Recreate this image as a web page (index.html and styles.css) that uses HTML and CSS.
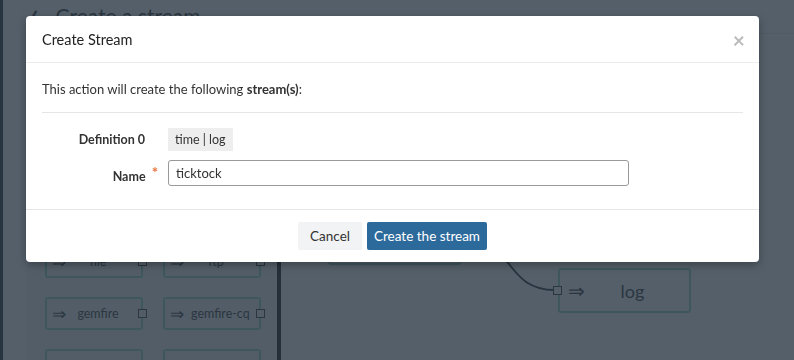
FILE: index.html
```html
<!DOCTYPE html>
<html lang="en">
<head>
    <meta charset="UTF-8">
    <meta name="viewport" content="width=device-width, initial-scale=1.0">
    <title>Create a stream</title>
    <link rel="stylesheet" href="styles.css">
</head>
<body>
    <div class="app">
        <div class="gutter"></div>
        <div class="page">
            <header class="page-header">
                <span class="back">&lsaquo;</span>
                <h1>Create a stream</h1>
            </header>
            <div class="workspace">
                <div class="palette">
                    <div class="palette-item"><span class="arrow">&rArr;</span><span class="name">cdc</span><span class="port"></span></div>
                    <div class="palette-item"><span class="arrow">&rArr;</span><span class="name">geode</span><span class="port"></span></div>
                    <div class="palette-item"><span class="arrow">&rArr;</span><span class="name">http</span><span class="port"></span></div>
                    <div class="palette-item"><span class="arrow">&rArr;</span><span class="name">jdbc</span><span class="port"></span></div>
                    <div class="palette-item"><span class="arrow">&rArr;</span><span class="name">jms</span><span class="port"></span></div>
                    <div class="palette-item"><span class="arrow">&rArr;</span><span class="name">mail</span><span class="port"></span></div>
                    <div class="palette-item"><span class="arrow">&rArr;</span><span class="name">mongodb</span><span class="port"></span></div>
                    <div class="palette-item"><span class="arrow">&rArr;</span><span class="name">mqtt</span><span class="port"></span></div>
                    <div class="palette-item"><span class="arrow">&rArr;</span><span class="name">file</span><span class="port"></span></div>
                    <div class="palette-item"><span class="arrow">&rArr;</span><span class="name">ftp</span><span class="port"></span></div>
                    <div class="palette-item"><span class="arrow">&rArr;</span><span class="name">gemfire</span><span class="port"></span></div>
                    <div class="palette-item"><span class="arrow">&rArr;</span><span class="name name-left">gemfire-cq</span><span class="port"></span></div>
                    <div class="palette-item"><span class="arrow">&rArr;</span><span class="name">rabbit</span><span class="port"></span></div>
                    <div class="palette-item"><span class="arrow">&rArr;</span><span class="name">s3</span><span class="port"></span></div>
                </div>
                <div class="canvas">
                    <svg class="links" width="513" height="326" viewBox="281 34 513 326">
                        <path d="M469 242 C 515 242, 505 290, 555 290" fill="none" stroke="#1f2a30" stroke-width="2"/>
                    </svg>
                    <div class="node node-time"><span class="arrow">&rArr;</span><span class="name">time</span><span class="port port-out"></span></div>
                    <div class="node node-log"><span class="port port-in"></span><span class="arrow">&rArr;</span><span class="name">log</span></div>
                </div>
            </div>
        </div>
    </div>

    <div class="backdrop"></div>

    <div class="modal-wrap">
        <div class="modal">
            <div class="modal-header">
                <h2>Create Stream</h2>
                <span class="close">&times;</span>
            </div>
            <div class="modal-body">
                <p class="intro">This action will create the following <strong>stream(s)</strong>:</p>
                <form class="stream-form">
                    <div class="form-row">
                        <label class="field-label">Definition 0</label>
                        <div><span class="dsl">time | log</span></div>
                    </div>
                    <div class="form-row">
                        <label class="field-label" for="name">Name<span class="required">*</span></label>
                        <input type="text" id="name" name="name" value="ticktock" />
                    </div>
                </form>
            </div>
            <div class="modal-footer">
                <button type="button" class="btn btn-default">Cancel</button>
                <button type="submit" class="btn btn-primary">Create the stream</button>
            </div>
        </div>
    </div>
</body>
</html>
```

FILE: styles.css
```css
body {
    font-family: "Lato", "Open Sans", sans-serif;
    margin: 0;
    color: #333;
    background-color: #fff;
    overflow: hidden;
}
.app {
    display: flex;
    height: 360px;
}
.gutter {
    width: 27px;
    flex-shrink: 0;
    border-left: 3px solid #1e2d38;
    box-sizing: border-box;
    background-color: #fff;
}
.page {
    flex: 1;
    display: flex;
    flex-direction: column;
    min-height: 0;
}
.page-header {
    height: 34px;
    flex-shrink: 0;
    display: flex;
    align-items: center;
    gap: 17px;
    padding-left: 4px;
    box-sizing: border-box;
    border-bottom: 1px solid #eaeaea;
}
.page-header h1 {
    margin: 0;
    font-size: 21px;
    font-weight: normal;
    margin-top: -2px;
}
.back {
    font-size: 26px;
    font-weight: bold;
    margin-top: -8px;
}
.workspace {
    flex: 1;
    display: flex;
    min-height: 0;
}
.palette {
    width: 254px;
    flex-shrink: 0;
    border-right: 4px solid #111;
    background-color: #f6f6f6;
    display: grid;
    grid-template-columns: 98px 98px;
    grid-auto-rows: 33px;
    column-gap: 20px;
    row-gap: 19px;
    padding: 3px 0 0 18px;
    box-sizing: border-box;
    align-content: start;
    overflow: hidden;
}
.palette-item, .node {
    display: flex;
    align-items: center;
    border: 2px solid #8fd6c4;
    border-radius: 3px;
    box-sizing: border-box;
    position: relative;
    font-size: 12.5px;
    white-space: nowrap;
}
.arrow {
    font-size: 17px;
    padding-left: 5px;
    width: 19px;
}
.palette-item .name {
    flex: 1;
    text-align: center;
    padding-right: 16px;
}
.palette-item .name-left {
    text-align: left;
    padding: 0 0 0 2px;
}
.port {
    position: absolute;
    width: 7px;
    height: 7px;
    border: 1px solid #333;
    background-color: #f6f6f6;
    right: -6px;
    top: 50%;
    margin-top: -5px;
}
.canvas {
    flex: 1;
    position: relative;
}
.links {
    position: absolute;
    left: 0;
    top: 0;
}
.node {
    position: absolute;
    width: 133px;
    height: 45px;
    font-size: 18px;
    background-color: #fff;
}
.node .arrow {
    font-size: 20px;
    width: 22px;
}
.node .name {
    flex: 1;
    text-align: center;
    padding-right: 26px;
}
.node-time {
    left: 47px;
    top: 186px;
}
.node-log {
    left: 277px;
    top: 234px;
}
.port-out {
    right: -6px;
}
.port-in {
    left: -7px;
    right: auto;
    background-color: #fff;
}
.node-log .arrow {
    padding-left: 8px;
}
.node-log .name {
    padding-right: 14px;
}
.backdrop {
    position: fixed;
    inset: 0;
    background-color: rgba(41, 55, 68, 0.8);
}
.modal-wrap {
    position: fixed;
    inset: 0;
    padding: 16px 35px 0 26px;
}
.modal {
    background-color: #fff;
    border-radius: 4px;
    box-shadow: 0 3px 9px rgba(0, 0, 0, 0.3);
}
.modal-header {
    height: 47px;
    padding: 0 16px;
    display: flex;
    align-items: center;
    justify-content: space-between;
    border-bottom: 1px solid #ececec;
    box-sizing: border-box;
}
.modal-header h2 {
    margin: 0;
    font-size: 14.5px;
    font-weight: normal;
    color: #222;
}
.close {
    font-size: 21px;
    font-weight: bold;
    color: #bbb;
    line-height: 1;
    margin-right: -2px;
}
.modal-body {
    padding: 16px 16px 23px;
}
.intro {
    margin: 0 0 14px;
    font-size: 13px;
    line-height: 20px;
    padding-bottom: 13px;
    border-bottom: 1px solid #e6e6e6;
}
.intro strong {
    font-weight: bold;
}
.stream-form {
    display: grid;
    row-gap: 9px;
    padding-top: 1px;
}
.form-row {
    display: grid;
    grid-template-columns: 103px 461px;
    column-gap: 23px;
    align-items: center;
}
.field-label {
    text-align: right;
    font-weight: bold;
    font-size: 12.5px;
}
.required {
    color: #e8743b;
    font-size: 15px;
    margin-left: 6px;
    margin-right: -13px;
    vertical-align: 3px;
}
.dsl {
    display: inline-block;
    background-color: #eee;
    padding: 0 7px;
    height: 23px;
    line-height: 23px;
    font-size: 12.5px;
}
input[type="text"] {
    height: 26px;
    box-sizing: border-box;
    border: 1px solid #999;
    border-radius: 3px;
    padding: 0 7px;
    font-family: inherit;
    font-size: 13px;
    color: #333;
}
.modal-footer {
    border-top: 1px solid #e6e6e6;
    padding: 12px 0 12px;
    display: flex;
    justify-content: center;
    gap: 5px;
}
.btn {
    height: 28px;
    border: none;
    border-radius: 2px;
    font-family: inherit;
    font-size: 13.5px;
    padding: 0;
    white-space: nowrap;
    cursor: pointer;
}
.btn-default {
    background-color: #f2f3f4;
    color: #333;
    width: 64px;
}
.btn-primary {
    background-color: #2d6a9c;
    color: #fff;
    width: 120px;
}
```
